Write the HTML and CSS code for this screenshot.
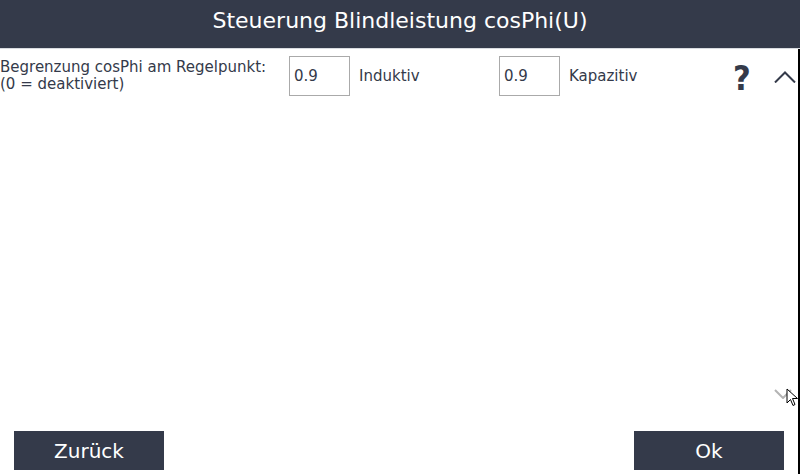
FILE: index.html
```html
<!DOCTYPE html>
<html>
<head>
<meta charset="utf-8">
<link rel="stylesheet" href="styles.css">
</head>
<body>
<div class="screen">
  <header class="titlebar">Steuerung Blindleistung cosPhi(U)</header>
  <main class="content">
    <div class="row">
      <div class="label">Begrenzung cosPhi am Regelpunkt:<br>(0 = deaktiviert)</div>
      <div class="field">0.9</div>
      <div class="unit unit-ind">Induktiv</div>
      <div class="field">0.9</div>
      <div class="unit unit-kap">Kapazitiv</div>
      <div class="help">?</div>
      <svg class="chev" width="22" height="12" viewBox="0 0 22 12"><path d="M1 11.5 L11 1.5 L21 11.5" fill="none" stroke="#343a4a" stroke-width="2"/></svg>
    </div>
    <div class="spacer"></div>
    <div class="down-row">
      <svg class="chev-down" width="18" height="10" viewBox="0 0 18 10"><path d="M1 1 L9 9 L17 1" fill="none" stroke="#b4b4b4" stroke-width="2"/></svg>
      <svg class="cursor" width="14" height="20" viewBox="0 0 14 20"><path d="M1 1 L1 15 L4.5 11.5 L7 17.5 L9 16.5 L6.5 10.5 L11.5 10.5 Z" fill="#fff" stroke="#000" stroke-width="1" stroke-linejoin="miter"/></svg>
    </div>
    <footer class="footer">
      <div class="btn">Zurück</div>
      <div class="btn">Ok</div>
    </footer>
  </main>
</div>
</body>
</html>
```
FILE: styles.css
```css
html, body {
  margin: 0;
  padding: 0;
  background: #fff;
}
.screen {
  width: 800px;
  height: 474px;
  display: flex;
  flex-direction: column;
  font-family: "DejaVu Sans", sans-serif;
  color: #343a4a;
  overflow: hidden;
}
.titlebar {
  height: 48px;
  background: #343a4a;
  color: #fff;
  font-size: 22px;
  line-height: 42px;
  text-align: center;
  border-bottom: 1px solid #d8dbe0;
  flex: none;
}
.content {
  flex: 1;
  display: flex;
  flex-direction: column;
  border-right: 2px solid #000;
}
.row {
  display: flex;
  align-items: center;
  height: 40px;
  margin-top: 7px;
}
.label {
  width: 289px;
  font-size: 15px;
  line-height: 17px;
  margin-top: -1px;
}
.field {
  border: 1px solid #aaa;
  font-size: 15px;
  line-height: 38px;
  padding-left: 4px;
  box-sizing: border-box;
  width: 61px;
  height: 40px;
}
.unit {
  font-size: 15px;
  padding-left: 9px;
  box-sizing: border-box;
}
.unit-ind { width: 149px; }
.unit-kap { width: 173px; }
.help {
  width: 41px;
  font-family: "DejaVu Sans Condensed", "DejaVu Sans", sans-serif;
  font-size: 34px;
  font-weight: bold;
  padding-top: 4px;
}
.chev {
  margin-top: 2px;
}
.spacer { flex: 1; }
.down-row {
  height: 42px;
  display: flex;
  justify-content: flex-end;
  align-items: flex-start;
  position: relative;
}
.chev-down {
  margin-right: 6px;
  margin-top: 0;
}
.cursor {
  position: absolute;
  right: -2px;
  top: -1px;
}
.footer {
  display: flex;
  justify-content: space-between;
  padding: 0 14px 4px 14px;
}
.btn {
  width: 150px;
  height: 39px;
  background: #343a4a;
  color: #fff;
  font-size: 20px;
  line-height: 40px;
  text-align: center;
}
```
